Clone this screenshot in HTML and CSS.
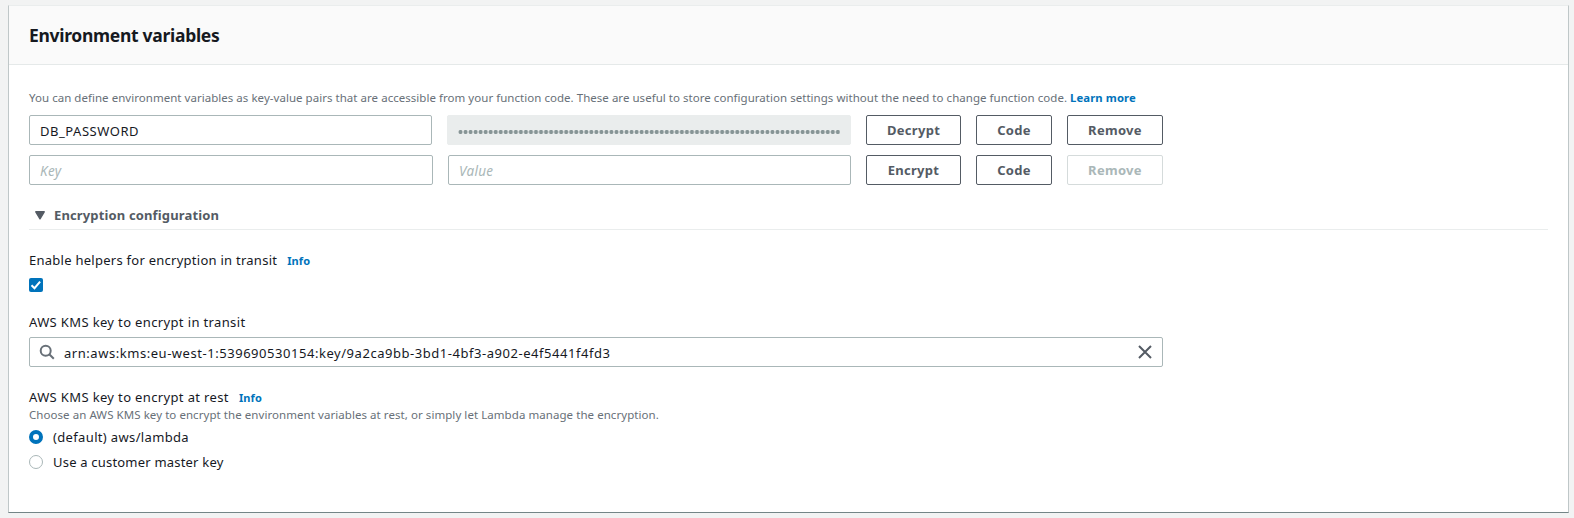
FILE: index.html
```html
<!DOCTYPE html>
<html lang="en">
<head>
<meta charset="utf-8">
<title>Environment variables</title>
<link rel="stylesheet" href="styles.css">
</head>
<body>
<section class="card">
  <header class="card-header"><h2 class="title">Environment variables</h2></header>
  <div class="card-body">
    <p class="hint intro">You can define environment variables as key-value pairs that are accessible from your function code. These are useful to store configuration settings without the need to change function code. <a class="link">Learn more</a></p>
    <div class="row row-first">
      <div class="field name">DB_PASSWORD</div>
      <div class="field masked"><span class="dots"></span></div>
      <button class="btn">Decrypt</button>
      <button class="btn">Code</button>
      <button class="btn">Remove</button>
    </div>
    <div class="row">
      <div class="field placeholder">Key</div>
      <div class="field placeholder">Value</div>
      <button class="btn">Encrypt</button>
      <button class="btn">Code</button>
      <button class="btn disabled">Remove</button>
    </div>
    <div class="expander">
      <svg class="caret" width="10" height="9" viewBox="0 0 10 9"><path d="M0.8 0.8h8.4L5 7.8z" fill="#545b64" stroke="#545b64" stroke-width="1.4" stroke-linejoin="round"/></svg>
      <span>Encryption configuration</span>
    </div>
    <div class="label helpers"><span>Enable helpers for encryption in transit</span><a class="link info">Info</a></div>
    <div class="checkbox"><svg width="14" height="14" viewBox="0 0 14 14"><path d="M2.5 7.2l3 3 5.6-6.6" fill="none" stroke="#fff" stroke-width="2"/></svg></div>
    <div class="label">AWS KMS key to encrypt in transit</div>
    <div class="field search">
      <svg width="16" height="16" viewBox="0 0 16 16" fill="none" stroke="#687078" stroke-width="2"><circle cx="6.7" cy="6.7" r="5"/><path d="M10.3 10.3l4.5 4.5"/></svg>
      <span class="arn">arn:aws:kms:eu-west-1:539690530154:key/9a2ca9bb-3bd1-4bf3-a902-e4f5441f4fd3</span>
      <svg width="14" height="14" viewBox="0 0 14 14" fill="none" stroke="#545b64" stroke-width="2"><path d="M1 1l12 12M13 1L1 13"/></svg>
    </div>
    <div class="label"><span>AWS KMS key to encrypt at rest</span><a class="link info">Info</a></div>
    <p class="hint choose">Choose an AWS KMS key to encrypt the environment variables at rest, or simply let Lambda manage the encryption.</p>
    <div class="option"><span class="radio checked"></span><span class="default">(default) aws/lambda</span></div>
    <div class="option"><span class="radio"></span><span class="custom">Use a customer master key</span></div>
  </div>
</section>
</body>
</html>
```
FILE: styles.css
```css
* { box-sizing: border-box; }
body { margin: 0; padding: 5px 5px 5px 8px; background: #f2f3f3; color: #16191f; font: 13px/20px "Noto Sans", sans-serif; }
.card { width: 1561px; height: 508px; background: #fff; border: 1px solid #bfc7c8; border-top-color: #eaeded; border-bottom-color: #748587; }
.card-header { height: 59px; padding: 0 20px; display: flex; align-items: center; background: #fafafa; border-bottom: 1px solid #e5e9e9; }
.title { margin: 0; font-size: 17.5px; line-height: 28px; font-weight: 700; letter-spacing: -0.3px; }
.card-body { padding: 23px 20px 0; }
.hint { margin: 0; font-size: 11.5px; line-height: 18px; color: #687078; letter-spacing: 0.035px; }
.intro { height: 27px; padding-top: 1px; }
.link { color: #0073bb; font-weight: 700; font-size: 11.3px; letter-spacing: 0.1px; }
.row { display: grid; grid-template-columns: 404px 403px 95px 76px 96px; gap: 15px; margin-bottom: 10px; }
.row-first { grid-template-columns: 403px 404px 95px 76px 96px; }
.field { height: 30px; padding: 2px 10px 0; display: flex; align-items: center; border: 1px solid #aab7b8; border-radius: 2px; background: #fff; }
.name { letter-spacing: 0.53px; }
.masked { padding-top: 4px; background: #eaeded; border-color: #eaeded; }
.dots { flex: 1; height: 4px; background: radial-gradient(circle, #879596 1.8px, transparent 2.3px) 0 0 / 5.04px 4px repeat-x; }
.placeholder { color: #aab7b8; font-size: 13.5px; font-style: italic; letter-spacing: 0.3px; }
.btn { height: 30px; padding: 0; border: 1px solid #545b64; border-radius: 2px; background: #fff; color: #545b64; font: 700 13px/20px "Noto Sans", sans-serif; letter-spacing: 0.3px; }
.disabled { color: #aab7b8; border-color: #d5dbdb; }
.expander { height: 35px; margin-bottom: 20px; padding: 10px 0 0 6px; display: flex; gap: 9px; border-bottom: 1px solid #eaeded; color: #545b64; font-size: 13px; font-weight: 700; letter-spacing: 0.14px; }
.caret { margin-top: 6px; }
.label { display: flex; height: 20px; letter-spacing: 0.36px; }
.helpers { letter-spacing: 0.26px; }
.info { margin-left: 10px; padding-top: 1px; font-size: 11px; letter-spacing: 0.1px; }
.checkbox { width: 14px; height: 14px; margin: 8px 0 20px; background: #0073bb; border-radius: 2px; display: flex; }
.search { width: 1134px; margin: 5px 0 20px; padding: 0 10px 0 9px; }
.arn { flex: 1; margin-left: 9px; padding-top: 2px; letter-spacing: 0.54px; }
.choose { height: 17px; line-height: 16px; letter-spacing: 0.06px; }
.option { display: flex; height: 25px; align-items: center; gap: 10px; }
.default { letter-spacing: 0.35px; }
.custom { letter-spacing: 0.2px; }
.radio { width: 14px; height: 14px; border: 1px solid #aab7b8; border-radius: 50%; }
.checked { border: 4px solid #0073bb; }
```
